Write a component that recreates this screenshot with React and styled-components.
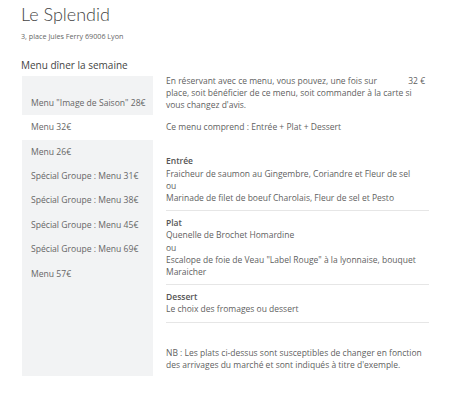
import React from "react";
import styled, { createGlobalStyle } from "styled-components";

const Global = createGlobalStyle`
  html, body { margin: 0; padding: 0; background: #fff; }
  body { font-family: "Open Sans", "Noto Sans", sans-serif; color: #666; }
`;

const Page = styled.div`
  width: 462px;
  height: 400px;
  padding: 3px 0 0 21px;
  box-sizing: border-box;
  overflow: hidden;
`;

const Title = styled.h1`
  margin: 0;
  font-family: "Lato", "Open Sans", sans-serif;
  font-weight: 300;
  font-size: 18px;
  line-height: 22px;
  color: #444;
`;

const Address = styled.div`
  margin-top: 6px;
  font-size: 7.2px;
  line-height: 10px;
  color: #666;
`;

const SectionTitle = styled.h2`
  margin: 17px 0 0 0;
  font-family: "Open Sans", sans-serif;
  font-weight: 400;
  font-size: 10px;
  line-height: 14px;
  color: #444;
`;

const Layout = styled.div`
  display: flex;
  align-items: stretch;
  gap: 13px;
  margin-top: 4px;
  margin-left: 1px;
`;

const Sidebar = styled.ul`
  list-style: none;
  margin: 0;
  padding: 14.8px 0 0 0;
  width: 131px;
  background: #f2f3f4;
`;

const Item = styled.li`
  height: 24.4px;
  line-height: 24.4px;
  padding-left: 9px;
  font-size: 8.6px;
  color: #666;
  white-space: nowrap;
  background: ${(p) => (p.$active ? "#fff" : "transparent")};
`;

const Content = styled.div`
  width: 263px;
  margin-top: -1px;
  font-size: 8.5px;
  line-height: 12.2px;
  color: #5f5f5f;
  padding-bottom: 5px;
`;

const Intro = styled.p`
  margin: 0;
`;

const Price = styled.span`
  float: right;
  margin-left: 10px;
  margin-right: 4px;
`;

const Includes = styled.p`
  margin: 9.5px 0 0 0;
`;

const Courses = styled.div`
  margin-top: 16px;
`;

const Course = styled.div`
  padding: 6px 0;
  border-bottom: 1px solid #e6e6e6;
`;

const CourseName = styled.div`
  font-weight: 600;
  color: #555;
`;

const Note = styled.p`
  margin: 24px 0 0 0;
`;

const menus = [
  'Menu "Image de Saison" 28€',
  "Menu 32€",
  "Menu 26€",
  "Spécial Groupe : Menu 31€",
  "Spécial Groupe : Menu 38€",
  "Spécial Groupe : Menu 45€",
  "Spécial Groupe : Menu 69€",
  "Menu 57€",
];

const courses = [
  {
    name: "Entrée",
    lines: [
      "Fraicheur de saumon au Gingembre, Coriandre et Fleur de sel",
      "ou",
      "Marinade de filet de boeuf Charolais, Fleur de sel et Pesto",
    ],
  },
  {
    name: "Plat",
    lines: [
      "Quenelle de Brochet Homardine",
      "ou",
      'Escalope de foie de Veau "Label Rouge" à la lyonnaise, bouquet Maraicher',
    ],
  },
  {
    name: "Dessert",
    lines: ["Le choix des fromages ou dessert"],
  },
];

export default function App() {
  return (
    <Page>
      <Global />
      <Title>Le Splendid</Title>
      <Address>3, place Jules Ferry 69006 Lyon</Address>
      <SectionTitle>Menu dîner la semaine</SectionTitle>
      <Layout>
        <Sidebar>
          {menus.map((m, i) => (
            <Item key={m} $active={i === 1}>
              {m}
            </Item>
          ))}
        </Sidebar>
        <Content>
          <Intro>
            <Price>32 €</Price>
            En réservant avec ce menu, vous pouvez, une fois sur place, soit
            bénéficier de ce menu, soit commander à la carte si vous changez
            d'avis.
          </Intro>
          <Includes>Ce menu comprend : Entrée + Plat + Dessert</Includes>
          <Courses>
            {courses.map((c) => (
              <Course key={c.name}>
                <CourseName>{c.name}</CourseName>
                {c.lines.map((l, i) => (
                  <div key={i}>{l}</div>
                ))}
              </Course>
            ))}
          </Courses>
          <Note>
            NB : Les plats ci-dessus sont susceptibles de changer en fonction
            des arrivages du marché et sont indiqués à titre d'exemple.
          </Note>
        </Content>
      </Layout>
    </Page>
  );
}
